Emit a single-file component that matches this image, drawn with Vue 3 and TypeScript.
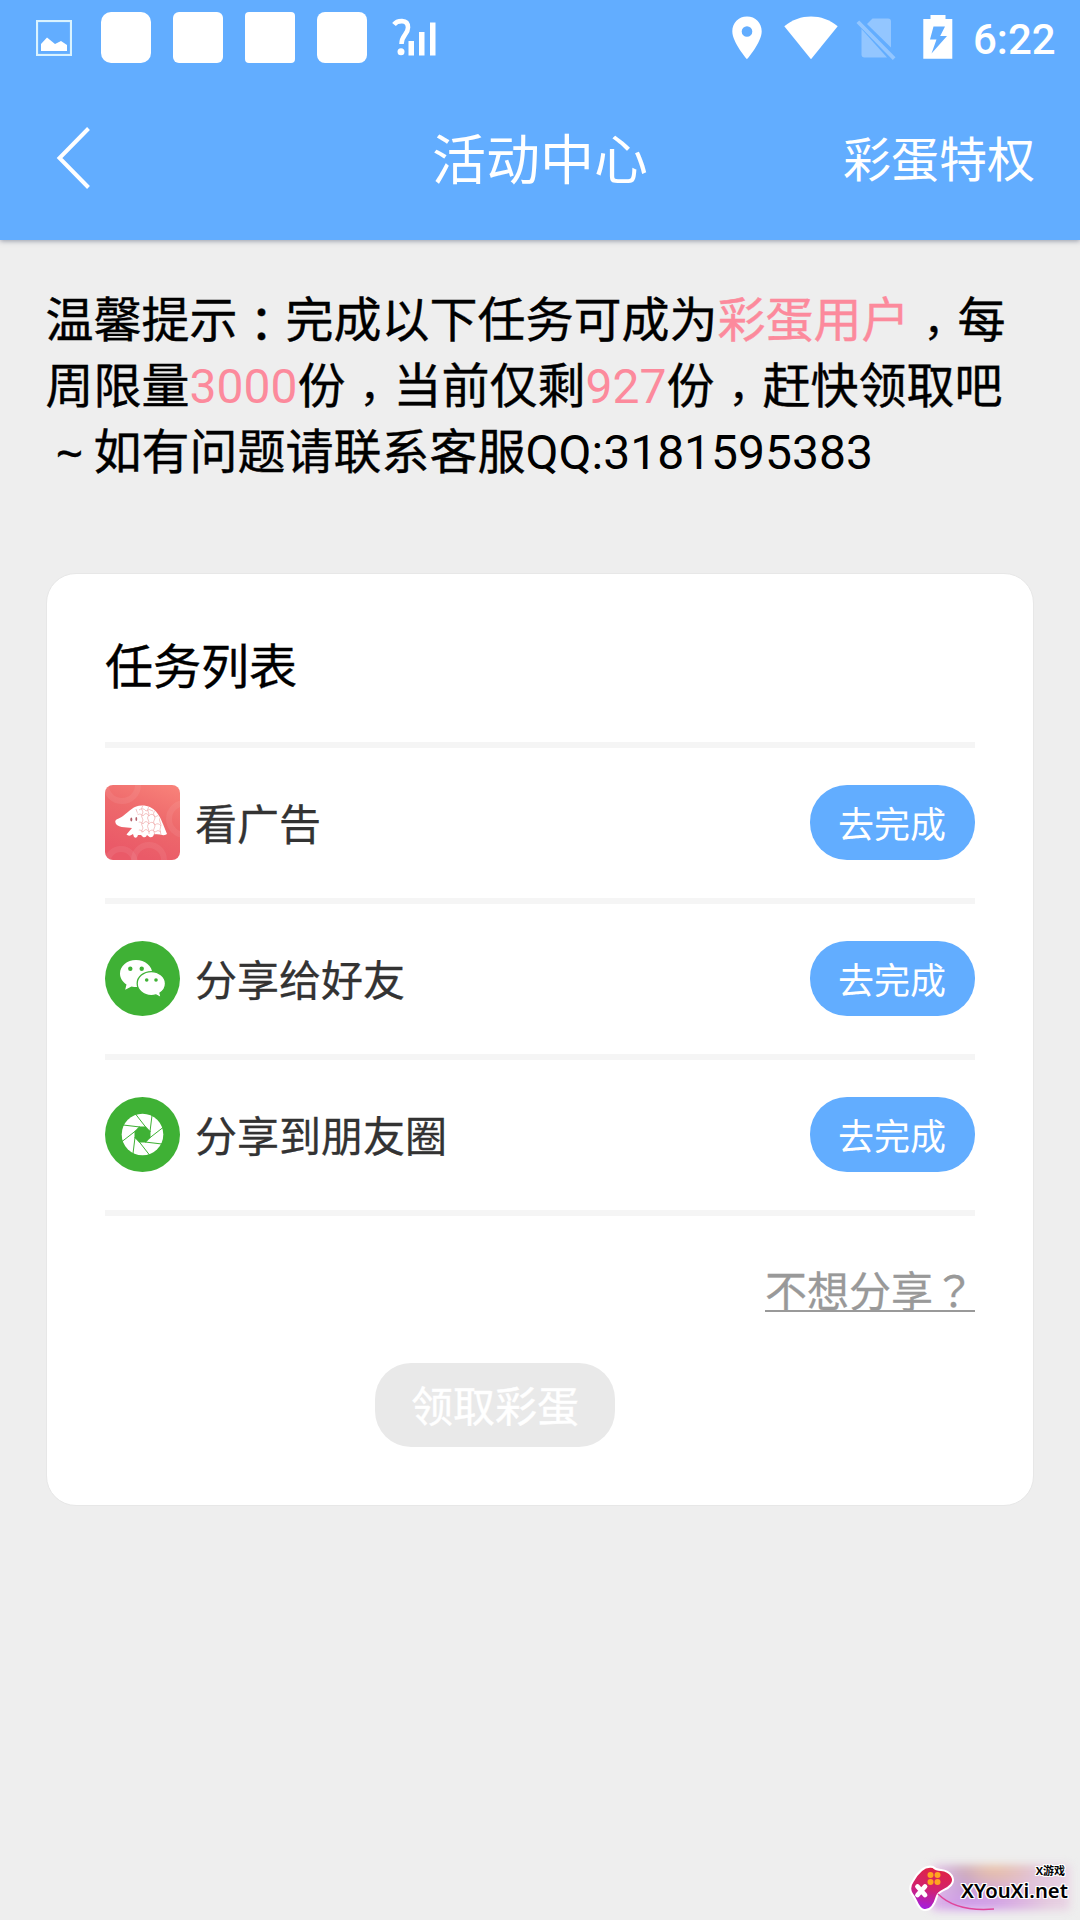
<script setup lang="ts">
interface Task {
  id: 'ad' | 'friend' | 'moments'
  label: string
}

const tasks: Task[] = [
  { id: 'ad', label: '看广告' },
  { id: 'friend', label: '分享给好友' },
  { id: 'moments', label: '分享到朋友圈' },
]

const blades: number[] = [0, 45, 90, 135, 180, 225, 270, 315]
const total = 3000
const remaining = 927
</script>

<template>
  <div class="screen">
    <header class="top">
      <div class="status">
        <svg class="pic" viewBox="0 0 36 36">
          <rect x="1" y="1" width="34" height="34" fill="none" stroke="#d9f3ff" stroke-width="2.2" />
          <path d="M5 31V24L11 17.5L19 24L25 21L31 25V31Z" fill="#fff" />
        </svg>
        <div class="blocks">
          <i class="block r10"></i>
          <i class="block r6"></i>
          <i class="block r4"></i>
          <i class="block r8"></i>
        </div>
        <svg class="signal" viewBox="0 0 46 40">
          <path d="M2 7.5C5 3.5 16 1.5 16 10.500C16 17.5 9.500 18 9.500 27" fill="none" stroke="#fff" stroke-width="4.600" />
          <circle cx="9" cy="34.700" r="3.500" fill="#fff" />
          <path d="M16.500 24h5.500v14.500h-5.500zM27 15h5.500v23.500h-5.500zM38 5.500h5.500v33h-5.500z" fill="#fff" />
        </svg>
        <span class="grow"></span>
        <svg class="pin" viewBox="0 0 30 44">
          <path fill="#fff" fill-rule="evenodd" d="M15 .5C6.500 .5 .3 6.800 .3 15.300C.3 26.500 15 43.300 15 43.300S29.700 26.500 29.700 15.300C29.700 6.800 23.500 .5 15 .5ZM15 10.200A5.300 5.300 0 1 1 15 20.800A5.300 5.300 0 1 1 15 10.200Z" />
        </svg>
        <svg class="wifi" viewBox="0 0 54 44">
          <path fill="#fff" d="M.3 10.200C16 -2.700 38 -2.700 53.700 10.200L27 43.300Z" />
        </svg>
        <svg class="sim" viewBox="0 0 40 44">
          <g fill="#fff" opacity=".31">
            <path d="M11 8L16.500 2.600H32Q35 2.600 35 5.600V31.500Z" />
            <path d="M5.500 13L31 41.500H8.500Q5.500 41.500 5.500 38.500Z" />
            <path d="M.5 7L3.200 4.500L39.500 41.200L36.800 44Z" />
          </g>
        </svg>
        <svg class="battery" viewBox="0 0 30 44">
          <path fill="#fff" fill-rule="evenodd" d="M7.500 0H22.500V4H29.300V43.700H.3V4H7.500ZM10.500 11.500L7 24.500H13.500L8.500 38.500L24 21H17.200L22 11.500Z" />
        </svg>
        <span class="clock">6:22</span>
      </div>
      <nav class="nav">
        <svg class="back" viewBox="0 0 36 66">
          <path d="M32.500 3.500L3.500 33L32.500 62.500" fill="none" stroke="#fff" stroke-width="4" />
        </svg>
        <h1 class="title">活动中心</h1>
        <span class="perk">彩蛋特权</span>
      </nav>
    </header>

    <p class="tip">
      <span class="line">温馨提示<span class="colon">：</span>完成以下任务可成为<em>彩蛋用户</em><span class="comma">，</span>每</span>
      <span class="line">周限量<em class="num">{{ total }}</em>份<span class="comma">，</span>当前仅剩<em class="num">{{ remaining }}</em>份<span class="comma">，</span>赶快领取吧</span>
      <span class="line"><span class="tilde">~</span>如有问题请联系客服<span class="num">QQ:3181595383</span></span>
    </p>

    <main class="card">
      <h2 class="heading">任务列表</h2>
      <ul class="tasks">
        <li v-for="task in tasks" :key="task.id" class="task">
          <svg v-if="task.id === 'ad'" class="icon" viewBox="0 0 75 75">
            <defs>
              <linearGradient id="coral" x1="1" y1="0" x2=".6" y2="1">
                <stop offset="0" stop-color="#f9837a" />
                <stop offset=".5" stop-color="#ee6a6c" />
                <stop offset="1" stop-color="#ea5a68" />
              </linearGradient>
              <clipPath id="tile"><rect width="75" height="75" rx="8" /></clipPath>
              <clipPath id="shell"><path d="M29 24C32 21.500 35 20.500 39 21C51 22 56 34 62 49Q56 51 50 50L34 47C33 39 36 31 29 24Z" /></clipPath>
            </defs>
            <g clip-path="url(#tile)">
              <rect width="75" height="75" fill="url(#coral)" />
              <g fill="none" stroke="#fff" stroke-opacity=".07" stroke-width="6">
                <circle cx="17" cy="0" r="16" />
                <circle cx="80" cy="34" r="16" />
                <circle cx="16" cy="78" r="14" />
                <circle cx="44" cy="75" r="15" />
              </g>
            </g>
            <path fill="#fff" d="M10.300 37C10 34 14 34 18 31C25 26 28 20.500 37 20.500C50 20.500 55 31 58 39L62 49Q60 51 55 49.500L49 49Q48 53 44.500 52L42 50Q41 53 38 52L36 50L33 50Q32 54 29 52L28 49Q24 52 21.500 49.500L27 43C21 42 11 43 10.300 37Z" />
            <g clip-path="url(#shell)" fill="none" stroke="#f0b0b0" stroke-width=".75">
              <path d="M31 24q2.500 4 0 7q3 4 0 8q3 4 0 9M38 20q-3 4 0 7q-3 4 0 8q-3 4 0 8q-3 3 0 7M44 21q-3 4 0 8q-3 4 0 8q-3 4 0 9v5M50 24q-3 5 0 9q-3 4 0 8q-3 4 0 9M56 30q-3 5 0 10q-2 4 0 10" />
              <path d="M31 31q4-4 7 0q3-5 6 0q3-4 6 1q3-3 6 0M31 39q4-4 7 0q3-5 6 0q3-4 6 1q3-3 6 1M31 47q4-4 7 0q3-5 6 0q3-4 6 0q3-3 6 0M34 25q4-3 7 1q3-3 7 0" />
            </g>
            <ellipse cx="26.300" cy="34.500" rx="1" ry="2" fill="#b4606a" />
            <ellipse cx="31.300" cy="34" rx=".9" ry="2" fill="#b4606a" />
          </svg>
          <svg v-else-if="task.id === 'friend'" class="icon" viewBox="0 0 75 75">
            <circle cx="37.500" cy="37.500" r="37.500" fill="#3fb135" />
            <path fill="#fff" d="M31 19C22 19 15 25 15 32.500C15 37 17.500 41 21.500 43.500L20.200 48.700L26.500 45.400Q29 46 32 46C41 46 47.300 40 47.300 32.500C47.300 25 40 19 31 19Z" />
            <path fill="#fff" stroke="#3fb135" stroke-width="1.300" d="M46.300 30.600C38.500 30.600 32.200 36 32.200 42.500C32.200 49.300 38.500 54.600 46.300 54.600Q48.800 54.600 51 53.900L56.200 56.800L55 52C58.500 49.800 60.500 46.500 60.500 42.500C60.500 36 54 30.600 46.300 30.600Z" />
            <g fill="#3fb135">
              <circle cx="25.300" cy="27.800" r="2.200" />
              <circle cx="36.700" cy="27.800" r="2.200" />
              <circle cx="41.700" cy="39" r="1.800" />
              <circle cx="51" cy="39" r="1.800" />
            </g>
          </svg>
          <svg v-else class="icon" viewBox="0 0 75 75">
            <circle cx="37.500" cy="37.500" r="37.500" fill="#3fb135" />
            <circle cx="37.500" cy="37.500" r="20.800" fill="#fff" />
            <path fill="#3fb135" d="M34.200 29.500h6.600l4.700 4.700v6.600l-4.700 4.700h-6.600l-4.700-4.700v-6.600z" />
            <path
              v-for="angle in blades"
              :key="angle"
              d="M30.500 17L41 30.500"
              :transform="`rotate(${angle} 37.5 37.5)`"
              stroke="#3fb135"
              stroke-width="1"
            />
          </svg>
          <span class="label">{{ task.label }}</span>
          <button class="go" type="button">去完成</button>
        </li>
      </ul>
      <a class="skip">不想分享<span class="mark">？</span></a>
      <button class="claim" type="button">领取彩蛋</button>
    </main>

    <div class="stamp">
      <svg class="pad" viewBox="0 0 48 50">
        <defs>
          <linearGradient id="padFill" x1=".5" y1="0" x2=".3" y2="1">
            <stop offset="0" stop-color="#e02343" />
            <stop offset=".5" stop-color="#d2226e" />
            <stop offset="1" stop-color="#a01fe8" />
          </linearGradient>
        </defs>
        <path fill="url(#padFill)" stroke="#fff" stroke-width="2" d="M5 17C10 8 17 1 25 3Q28 6 33 6C43 7 48 15 43 21C38 27 31 26 29 32C27 39 23 47 16 46C9 45 9 35 4 30Q0 24 5 17Z" />
        <g fill="#ffa51f">
          <circle cx="22.500" cy="11" r="3" /><circle cx="29.500" cy="11" r="3" />
          <circle cx="22.500" cy="18" r="3" /><circle cx="29.500" cy="18" r="3" />
        </g>
        <path d="M9.500 22.500L17 31M17 22.500L9.500 31" stroke="#fff" stroke-width="4.800" stroke-linecap="round" />
      </svg>
      <svg class="cord" viewBox="0 0 60 20"><path d="M2 2Q20 20 58 17" fill="none" stroke="#e0459a" stroke-width="1.500" /></svg>
      <div class="words">
        <span class="small">X游戏</span>
        <span class="site">XYouXi.net</span>
      </div>
    </div>
  </div>
</template>

<style>
body {
  margin: 0;
  background: #eee;
}
</style>

<style scoped>
.screen {
  position: relative;
  box-sizing: border-box;
  width: 1080px;
  height: 1920px;
  overflow: hidden;
  background: #eee;
  font-family: Roboto, "Noto Sans CJK SC", sans-serif;
  color: #000;
}
.top {
  height: 240px;
  background: #62adff;
  box-shadow: 0 1px 5px rgba(60, 70, 100, .5);
  color: #fff;
}
.status {
  display: flex;
  height: 72px;
  box-sizing: border-box;
  padding: 0 23px 0 36px;
}
.status svg { flex: none; }
.pic { width: 36px; height: 36px; margin: 20px 29px 0 0; }
.blocks { display: flex; gap: 22px; padding-top: 12px; }
.block { width: 50px; height: 51px; background: #fff; }
.r10 { border-radius: 10px; }
.r6 { border-radius: 6px; }
.r4 { border-radius: 4px; }
.r8 { border-radius: 8px; }
.signal { width: 46px; height: 40px; margin: 17px 0 0 25px; }
.grow { flex: 1; }
.pin { width: 30px; height: 44px; margin-top: 16px; }
.wifi { width: 54px; height: 44px; margin: 16px 0 0 22px; }
.sim { width: 40px; height: 44px; margin: 16px 0 0 18px; }
.battery { width: 30px; height: 44px; margin: 15px 0 0 27px; }
.clock {
  width: 84px;
  margin: 16px 0 0 20px;
  font-size: 42px;
  font-weight: 500;
  line-height: 48px;
  white-space: nowrap;
}
.nav {
  display: grid;
  grid-template-columns: 1fr auto 1fr;
  align-items: center;
  height: 168px;
  padding: 0 45px 0 56px;
}
.back { width: 36px; height: 66px; margin-top: 3px; }
.title {
  margin: 11px 0 0 -11px;
  font-size: 54px;
  font-weight: 400;
  line-height: 72px;
}
.perk {
  justify-self: end;
  margin-top: 9px;
  font-size: 48px;
  line-height: 66px;
}
.tip {
  margin: 48px 46px 0 45.5px;
  font-size: 48px;
  -webkit-text-stroke: .4px;
}
.line {
  display: block;
  height: 66px;
  line-height: 66px;
  white-space: nowrap;
}
em { font-style: normal; color: #fc8a9c; }
.num { -webkit-text-stroke: 0; }
.colon, .comma, .tilde {
  display: inline-block;
  width: 48px;
  height: 66px;
  vertical-align: top;
}
.colon, .comma { font-family: "Noto Sans CJK TC", sans-serif; }
/* The centred comma glyph is smaller than its em box, so it is set down onto the baseline. */
.comma {
  font-size: 42px;
  text-align: center;
  line-height: 84px;
}
.tilde { text-align: center; font-family: "Noto Sans", sans-serif; }
.card {
  display: flex;
  flex-direction: column;
  box-sizing: border-box;
  width: 988px;
  height: 933px;
  margin: 87px 0 0 46px;
  padding: 0 58px;
  border: 1px solid #e7e7e7;
  border-radius: 30px;
  background: #fff;
}
.heading {
  margin: 0;
  padding: 61px 0 41px;
  height: 66px;
  font-size: 48px;
  font-weight: 400;
  line-height: 66px;
  -webkit-text-stroke: .4px;
}
.tasks {
  margin: 0;
  padding: 0;
  list-style: none;
  border-top: 6px solid #f5f5f5;
}
.task {
  display: flex;
  align-items: center;
  height: 150px;
  border-bottom: 6px solid #f5f5f5;
}
.icon { width: 75px; height: 75px; margin-bottom: 1px; }
.label {
  flex: 1;
  margin-left: 15px;
  padding-top: 5px;
  font-size: 42px;
  line-height: 60px;
  color: #333;
  -webkit-text-stroke: .3px;
}
button {
  box-sizing: border-box;
  padding: 0;
  border: 0;
  font-family: inherit;
  color: #fff;
}
.go {
  width: 165px;
  height: 75px;
  margin-bottom: 1px;
  padding: 7px 1px 0 0;
  border-radius: 37px;
  background: #62adff;
  font-size: 36px;
  line-height: 68px;
}
.skip {
  align-self: flex-end;
  width: 210px;
  height: 51px;
  margin-top: 43px;
  border-bottom: 2px solid #999;
  font-size: 42px;
  line-height: 60px;
  color: #999;
  white-space: nowrap;
  -webkit-text-stroke: .3px;
}
.mark { font-family: "Noto Sans CJK TC", sans-serif; }
.claim {
  width: 240px;
  height: 84px;
  margin: 51px 0 0 270px;
  padding-top: 5px;
  border-radius: 36px;
  background: #e9e9e9;
  font-size: 42px;
  line-height: 79px;
  -webkit-text-stroke: .4px;
}
.stamp {
  position: absolute;
  right: 0;
  bottom: 0;
  width: 180px;
  height: 70px;
  overflow: hidden;
}
.stamp::before {
  content: "";
  position: absolute;
  left: 32px;
  top: 15px;
  width: 138px;
  height: 45px;
  background:
    radial-gradient(ellipse at 45% 0, #ecc3a4 0, transparent 45%),
    radial-gradient(ellipse at 30% 100%, #d49cf0 0, transparent 55%),
    linear-gradient(90deg, #e9c8e6, #bfa0cb 25%, #ddbcd8 60%, #e9d4e4);
  filter: blur(4px);
}
.pad { position: absolute; left: 8px; top: 14px; width: 48px; height: 50px; }
.cord { position: absolute; left: 36px; top: 42px; width: 60px; height: 20px; }
.words {
  position: absolute;
  left: 61px;
  top: 15px;
  width: 108px;
  display: flex;
  flex-direction: column;
  text-shadow: 1px 0 #fff, -1px 0 #fff, 0 1px #fff, 0 -1px #fff, 1px 1px #fff, -1px -1px #fff, 1px -1px #fff, -1px 1px #fff;
}
.small {
  align-self: flex-end;
  padding-right: 4px;
  font: 700 11px/12px "Open Sans", "Noto Sans CJK SC", sans-serif;
}
.site {
  font: 600 20.3px/26px "Noto Sans", sans-serif;
  white-space: nowrap;
}
</style>
